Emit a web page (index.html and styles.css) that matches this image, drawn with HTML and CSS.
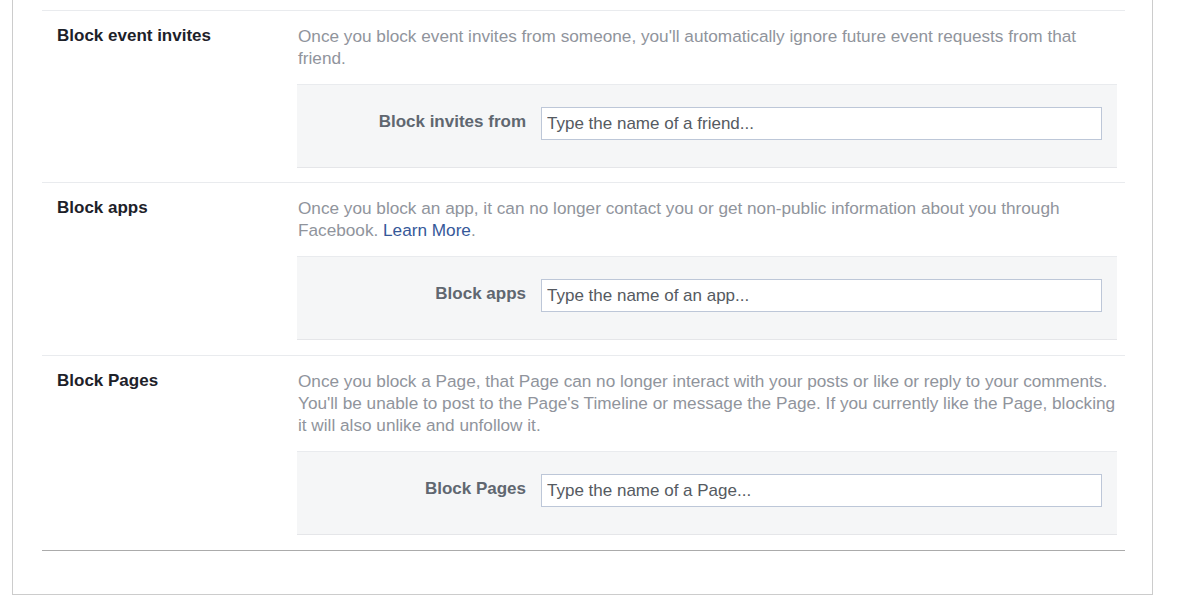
FILE: index.html
```html
<!DOCTYPE html>
<html lang="en">
<head>
<meta charset="utf-8">
<title>Blocking</title>
<link rel="stylesheet" href="styles.css">
</head>
<body>
<div class="box">
  <div class="list">
    <div class="row">
      <div class="title">Block event invites</div>
      <div class="content">
        <p class="desc">Once you block event invites from someone, you'll automatically ignore future event requests from that friend.</p>
        <div class="panel">
          <label class="label">Block invites from</label>
          <input class="field" type="text" placeholder="Type the name of a friend...">
        </div>
      </div>
    </div>
    <div class="row">
      <div class="title">Block apps</div>
      <div class="content">
        <p class="desc">Once you block an app, it can no longer contact you or get non-public information about you through Facebook. <a class="link" href="#">Learn More</a>.</p>
        <div class="panel">
          <label class="label">Block apps</label>
          <input class="field" type="text" placeholder="Type the name of an app...">
        </div>
      </div>
    </div>
    <div class="row">
      <div class="title">Block Pages</div>
      <div class="content">
        <p class="desc">Once you block a Page, that Page can no longer interact with your posts or like or reply to your comments. You'll be unable to post to the Page's Timeline or message the Page. If you currently like the Page, blocking it will also unlike and unfollow it.</p>
        <div class="panel">
          <label class="label">Block Pages</label>
          <input class="field" type="text" placeholder="Type the name of a Page...">
        </div>
      </div>
    </div>
  </div>
</div>
</body>
</html>
```

FILE: styles.css
```css
html, body {
  margin: 0;
  padding: 0;
  background: #fff;
}
body {
  font-family: "Liberation Sans", Arial, sans-serif;
  font-size: 17px;
  color: #1d2129;
}
.box {
  margin-left: 12px;
  width: 1141px;
  box-sizing: border-box;
  border: 1px solid #cccccc;
  border-top: none;
  padding: 10px 27px 43px 29px;
}
.list {
  border-bottom: 1px solid #ababab;
}
.row {
  display: flex;
  border-top: 1px solid #e9ebee;
  padding: 14px 0 15px 0;
}
.row:first-child {
  padding-bottom: 14px;
}
.title {
  flex: 0 0 240px;
  padding-left: 15px;
  font-weight: bold;
  line-height: 22px;
  color: #1d2129;
}
.content {
  flex: 1;
  min-width: 0;
}
.desc {
  margin: 0 0 15px 1px;
  font-size: 17.2px;
  line-height: 22px;
  color: #90949c;
}
.link {
  color: #365899;
  text-decoration: none;
}
.panel {
  display: flex;
  align-items: center;
  margin-right: 8px;
  background: #f5f6f7;
  border-top: 1px solid #e9ebee;
  border-bottom: 1px solid #e5e6e9;
  padding: 22px 13px 27px 0;
}
.label {
  flex: 0 0 229px;
  text-align: right;
  font-weight: bold;
  color: #606770;
  line-height: 22px;
  margin-top: -3px;
}
.field {
  margin-left: 15px;
  width: 561px;
  height: 33px;
  box-sizing: border-box;
  border: 1px solid #bdc7d8;
  background: #fff;
  padding: 0 5px;
  font-family: "Liberation Sans", Arial, sans-serif;
  font-size: 17px;
  color: #1d2129;
  outline: none;
}
.field::placeholder {
  color: #555a61;
  opacity: 1;
}
```
